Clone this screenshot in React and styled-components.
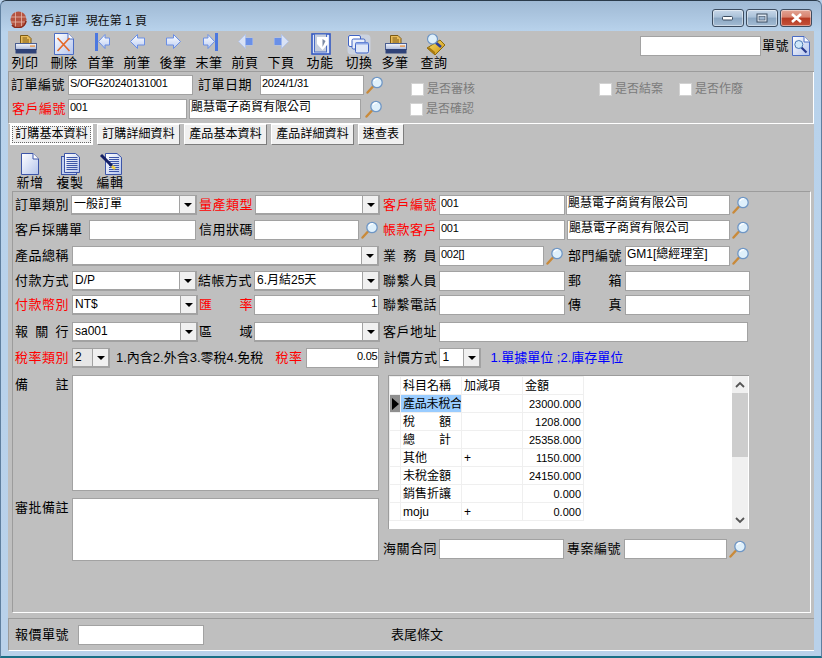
import React from "react";
import styled, { createGlobalStyle } from "styled-components";

const Global = createGlobalStyle`
  html, body { margin: 0; padding: 0; background: #b9d1ea; }
  * { box-sizing: border-box; }
`;
const FONT = `"Liberation Sans", "Noto Sans CJK TC", sans-serif`;

const Win = styled.div`
  width: 822px; height: 658px; display: flex; flex-direction: column;
  background: linear-gradient(#9fb9d4 0, #b9d3ec 31px, #b9d1ea 100%);
  border-radius: 6px 6px 0 0;
  border-top: 1px solid #2a3a4a; border-left: 1px solid #5f7f9f; border-right: 1px solid #5f7f9f;
  border-bottom: 2px solid #1b6f86;
  padding: 0 7px 6px 7px;
  font-family: ${FONT}; color: #000; overflow: hidden;
`;
const TitleBar = styled.div`
  height: 30px; flex: none; display: flex; align-items: center; padding: 6px 2px 0 2px;
`;
const TitleText = styled.span`
  font-size: 12px; margin-left: 4px; color: #111; white-space: pre;
`;
const WinBtns = styled.div`
  margin-left: auto; display: flex; gap: 2px; margin-right: 0; margin-top: -3px;
`;
const WinBtn = styled.div`
  width: 32px; height: 18px; border: 1px solid #3c4c60; border-radius: 3px;
  display: flex; align-items: center; justify-content: center;
  background: ${p => p.$close
    ? "linear-gradient(#e2a494 0, #d8826e 45%, #b63a22 50%, #c4513a 100%)"
    : "linear-gradient(#c8d8ea 0, #a9c0d8 45%, #8aa6c2 50%, #a4bcd4 100%)"};
  box-shadow: inset 0 0 0 1px rgba(255,255,255,.45);
`;
const Body = styled.div`
  flex: 1; display: flex; flex-direction: column; background: #bfbfbf; min-height: 0;
`;
const Toolbar = styled.div`
  height: 41px; flex: none; display: flex; padding-top: 2px; border-bottom: 1px solid #9c9c9c;
`;
const ToolBtn = styled.div`
  width: 34px; flex: none; display: flex; flex-direction: column; align-items: center;
  margin-left: ${p => p.$ml || 0}px;
`;
const ToolIcon = styled.div`
  height: 22px; display: flex; align-items: center; justify-content: center;
  margin-left: ${p => p.$dx || 0}px;
`;
const ToolLabel = styled.div`
  font-size: 13px; line-height: 15px; letter-spacing: .5px; white-space: nowrap;
`;
const SearchBox = styled.div`
  margin-left: auto; display: flex; align-items: flex-start; padding: 3px 4px 0 0;
`;
const Header = styled.div`
  height: 52px; flex: none; padding: 3px 0 0 2px;
  border-left: 1px solid #9c9c9c; border-right: 1px solid #fff; border-bottom: 1px solid #fff;
  display: flex; flex-direction: column; gap: 4px;
`;
const Row = styled.div`
  display: flex; height: 20px; flex: none; align-items: flex-start;
  margin-top: ${p => p.$mt || 0}px;
`;
const Label = styled.div`
  flex: none; width: ${p => p.$w || 54}px; margin-left: ${p => p.$ml || 0}px;
  font-size: 13px; line-height: 20px; letter-spacing: .5px; white-space: nowrap;
  color: ${p => p.$red ? "#f00" : "#000"};
  text-align: left;
  ${p => p.$just ? "text-align-last: justify; white-space: normal;" : ""}
`;
const Field = styled.div`
  flex: none; width: ${p => p.$w}px; height: ${p => p.$h || 20}px; margin-left: ${p => p.$ml || 0}px;
  background: #fff; border: 1px solid #a2a2a2;
  font-size: ${p => p.$cjk ? "12px" : "11px"}; letter-spacing: ${p => p.$cjk ? "0" : "-.25px"}; line-height: 14px;
  padding: 0 1px; white-space: nowrap; overflow: hidden;
  text-align: ${p => p.$right ? "right" : "left"};
`;
const Select = styled.div`
  flex: none; display: flex; width: ${p => p.$w}px; height: 20px; margin-left: ${p => p.$ml || 0}px;
  background: #fff; border: 1px solid #a2a2a2; border-right-width: 2px; border-bottom-width: 2px;
  font-size: 12px; line-height: 17px;
`;
const SelectText = styled.div`
  flex: 1; min-width: 0; padding-left: 2px; white-space: nowrap; overflow: hidden;
  background: ${p => p.$tint ? "#e6e6e6" : "transparent"};
`;
const SelectBtn = styled.div`
  width: 16px; flex: none; background: #f0f0f0; border-left: 1px solid #a2a2a2;
  display: flex; align-items: center; justify-content: center;
  &::after { content: ""; border: 4px solid transparent; border-top: 4px solid #000; border-bottom: 0; }
`;
const Note = styled.div`
  flex: none; margin-left: ${p => p.$ml || 0}px; font-size: 13px; line-height: 20px; white-space: nowrap;
  color: ${p => p.$blue ? "#00f" : "#000"};
`;
const MagWrap = styled.div`
  flex: none; width: 18px; height: 20px; margin-left: ${p => p.$ml || 2}px;
  display: flex; align-items: center; justify-content: center;
`;
const CheckItem = styled.div`
  flex: none; display: flex; align-items: center; width: ${p => p.$w}px; margin-left: ${p => p.$ml || 0}px;
  margin-top: ${p => p.$mt || 0}px; font-size: 12px; color: #7b7b7b; line-height: 14px;
`;
const CheckBox = styled.div`
  width: 13px; height: 13px; background: #fff; border: 1px solid #d2d2d2; margin-right: 3px;
`;
const Tabs = styled.div`
  height: 22px; flex: none; display: flex; gap: 4px; padding-left: 2px; margin-top: 0;
`;
const Tab = styled.div`
  width: ${p => p.$w}px; height: 21px; background: #f0f0f0; font-size: 12px; line-height: 19px;
  text-align: center; white-space: nowrap; letter-spacing: .1px;
  border: 1px solid; border-color: #fff #7d7d7d #7d7d7d #fff;
  ${p => p.$on ? "border: 2px solid #fff; outline: 1px dotted #666; outline-offset: -3px; line-height: 17px;" : ""}
`;
const SubBar = styled.div`
  height: 45px; flex: none; display: flex; gap: 6px; padding: 7px 0 0 5px;
`;
const FormPanel = styled.div`
  height: 422px; flex: none; margin: 0 3px 0 4px; padding: 3px 0 0 2px;
  border-top: 1px solid #9c9c9c; border-left: 1px solid #9c9c9c;
  border-right: 1px solid #fff; border-bottom: 1px solid #fff;
`;
const Rows = styled.div`
  display: flex; flex-direction: column;
`;
const Columns = styled.div`
  display: flex; margin-top: 7px;
`;
const LeftCol = styled.div`
  width: 364px; flex: none; display: flex; flex-direction: column; gap: 7px;
`;
const RightCol = styled.div`
  flex: none; margin-left: 4px; display: flex; flex-direction: column;
`;
const TextRow = styled.div`
  display: flex; align-items: flex-start;
`;
const GridBox = styled.div`
  width: 361px; height: 154px; margin-left: 5px; display: flex; background: #fff;
  border-top: 1px solid #9c9c9c; border-left: 1px solid #9c9c9c;
`;
const GridScroll = styled.div`
  flex: 1; min-width: 0;
`;
const Table = styled.table`
  border-collapse: collapse; table-layout: fixed; width: 194px; font-size: 12px;
`;
const Cell = styled.td`
  height: 18px; padding: 0 2px; border: 1px solid #efefef; white-space: nowrap; overflow: hidden;
  line-height: 16px; text-align: ${p => p.$right ? "right" : "left"};
  font-size: ${p => p.$num ? "11px" : "12px"};
  background: ${p => p.$sel ? "#99ccff" : "#fff"};
  ${p => p.$sel ? "padding-right: 0; letter-spacing: -.2px;" : ""}
`;
const Indicator = styled.td`
  height: 18px; width: 11px; padding: 0; border: 1px solid #efefef;
  background: ${p => p.$on ? "#8f8f8f" : "#fff"};
  text-align: center; line-height: 0;
`;
const IndicatorMark = styled.span`
  display: inline-block; border: 6px solid transparent; border-left: 7px solid #000; border-right: 0;
`;
const Spread = styled.span`
  display: block; width: 48px; text-align-last: justify;
`;
const ScrollBar = styled.div`
  width: 16px; flex: none; margin-right: 1px; background: #f0f0f0; display: flex; flex-direction: column;
`;
const ScrollArrow = styled.div`
  height: 17px; flex: none; display: flex; align-items: center; justify-content: center;
`;
const ScrollThumb = styled.div`
  height: 64px; background: #cdcdcd; flex: none;
`;
const ScrollTrack = styled.div`
  flex: 1;
`;
const Footer = styled.div`
  height: 33px; flex: none; margin-top: 5px; display: flex; align-items: flex-start; padding: 6px 0 0 6px;
  border-top: 1px solid #9c9c9c; border-left: 1px solid #9c9c9c; border-bottom: 1px solid #fff;
`;

const Mag = ({ ml }) => (
  <MagWrap $ml={ml}>
    <svg width="18" height="18" viewBox="0 0 18 18">
      <path d="M1.5 16.5 L7 10.5" stroke="#c98a3a" strokeWidth="2.4" strokeLinecap="round" />
      <circle cx="11" cy="6.5" r="5.2" fill="#dff0fb" stroke="#6f96c4" strokeWidth="1.3" />
      <path d="M8 5 a4 4 0 0 1 4 -2.4" stroke="#fff" strokeWidth="1.4" fill="none" />
    </svg>
  </MagWrap>
);

const Defs = () => (
  <svg width="0" height="0" style={{ position: "absolute" }}>
    <defs>
      <linearGradient id="arrowG" x1="0" y1="0" x2="0" y2="1">
        <stop offset="0" stopColor="#ffffff" /><stop offset="1" stopColor="#bccdf3" />
      </linearGradient>
      <linearGradient id="pageG" x1="0" y1="0" x2="1" y2="1">
        <stop offset="0" stopColor="#ffffff" /><stop offset="1" stopColor="#b4c4ec" />
      </linearGradient>
      <linearGradient id="printG" x1="0" y1="0" x2="0" y2="1">
        <stop offset="0" stopColor="#f6f8ff" /><stop offset="1" stopColor="#aab8d8" />
      </linearGradient>
      <linearGradient id="goldG" x1="0" y1="0" x2="1" y2="1">
        <stop offset="0" stopColor="#fbe26a" /><stop offset="1" stopColor="#c98f10" />
      </linearGradient>
    </defs>
  </svg>
);

const Printer = () => (
  <svg width="22" height="19" viewBox="0 0 22 19">
    <path d="M5.5 .5 H13 L16 3.5 V9 H5.5 Z" fill="#e9bb58" stroke="#7c5a14" />
    <path d="M7.5 3 H12 M7.5 5 H14 M7.5 7 H14" stroke="#7c5a14" />
    <rect x=".5" y="8.5" width="21" height="6" fill="url(#printG)" stroke="#4a5f92" />
    <rect x=".5" y="14" width="21" height="4.5" fill="#2f4278" />
    <rect x="15" y="10.5" width="5" height="1.2" fill="#f08a2a" />
  </svg>
);
const DeleteIcon = () => (
  <svg width="20" height="22" viewBox="0 0 20 22">
    <path d="M.5 .5 H14 L19.5 6 V21.5 H.5 Z" fill="url(#pageG)" stroke="#4a6cc4" />
    <path d="M14 .5 V6 H19.5" fill="#fff" stroke="#4a6cc4" />
    <path d="M3.5 5 L15.5 18 M15.5 5 L3.5 18" stroke="#e4692a" strokeWidth="1.7" />
  </svg>
);
const NavIcon = ({ dir, bar, solid }) => (
  <svg width="15" height="22" viewBox="0 0 15 22" style={dir === "r" ? { transform: "scaleX(-1)" } : undefined}>
    {bar && <rect x="0" y="0" width="3" height="18" fill="#4c78e0" />}
    {bar ? (
      <polygon points="3.5,8.5 10,1.5 10,5 14.5,5 14.5,12 10,12 10,15.5"
        fill="url(#arrowG)" stroke="#6a8fe6" />
    ) : (
      <polygon points=".5,8.5 7.5,1.5 7.5,5 14.5,5 14.5,12 7.5,12 7.5,15.5"
        fill={solid ? "#d9e2f5" : "url(#arrowG)"} stroke={solid ? "#b4c5ea" : "#6a8fe6"} />
    )}
    {solid && <rect x="7.5" y="5" width="7" height="7" fill="#6a90e8" />}
  </svg>
);
const FuncIcon = () => (
  <svg width="20" height="22" viewBox="0 0 20 22">
    <rect x="1" y="1" width="18" height="20" fill="#dfe7f8" stroke="#3459c4" strokeWidth="1.6" />
    <rect x="3.5" y="1" width="12" height="18" fill="#c6cedd" stroke="#4a6cc4" />
    <path d="M6 4 H17 V11 L11.5 17 L6 11 Z" fill="#fff" />
    <path d="M11.5 6 L14.5 8 L11.5 14 Z" fill="#7c8aa4" />
  </svg>
);
const SwitchIcon = () => (
  <svg width="24" height="21" viewBox="0 0 24 21">
    <rect x=".5" y=".5" width="23" height="20" rx="4" fill="#cfd8ea" opacity=".75" />
    <rect x="1.5" y="1.5" width="12" height="11" rx="1.5" fill="#fff" stroke="#3f62c4" />
    <rect x="5" y="5" width="13" height="10" rx="1.5" fill="#e8eefb" stroke="#3f62c4" />
    <rect x="8.5" y="8.5" width="13" height="10.5" rx="1.5" fill="#dfe7f8" stroke="#3f62c4" />
    <rect x="8.5" y="8.5" width="13" height="2" fill="#8ba6e6" />
  </svg>
);
const QueryIcon = () => (
  <svg width="20" height="23" viewBox="0 0 20 23">
    <polygon points="1,15 14,7 19,12 9,22" fill="url(#goldG)" stroke="#8a6a10" />
    <polygon points="1,15 9,22 9,19 3,14" fill="#a97a10" />
    <path d="M9 9 L15 14" stroke="#2b3f9a" strokeWidth="2.6" />
    <circle cx="6.5" cy="6" r="5" fill="#dff0fb" stroke="#6f96c4" strokeWidth="1.2" />
  </svg>
);
const FindDoc = () => (
  <svg width="18" height="20" viewBox="0 0 18 20">
    <path d="M.5 .5 H12 L17.5 6 V19.5 H.5 Z" fill="url(#pageG)" stroke="#4a6cc4" />
    <path d="M12 .5 V6 H17.5" fill="#fff" stroke="#4a6cc4" />
    <path d="M9 11 L14.5 16.5" stroke="#27398e" strokeWidth="2.2" />
    <circle cx="6.8" cy="8.5" r="4" fill="#cfe7f8" stroke="#4a78b4" />
  </svg>
);
const NewIcon = () => (
  <svg width="18" height="22" viewBox="0 0 18 22">
    <path d="M.5 .5 H12 L17.5 6 V21.5 H.5 Z" fill="url(#pageG)" stroke="#3c55a8" />
    <path d="M12 .5 V6 H17.5" fill="#fff" stroke="#3c55a8" />
  </svg>
);
const Lines = ({ x, y, w, n }) => (
  <path d={Array.from({ length: n }, (_, i) => `M${x} ${y + i * 2}.5 H${x + w}`).join(" ")} stroke="#3c55a8" />
);
const CopyIcon = () => (
  <svg width="19" height="22" viewBox="0 0 19 22">
    <rect x=".5" y="3.5" width="15" height="18" fill="#c3d0ee" stroke="#3c55a8" />
    <path d="M3.5 .5 H14.5 L18.5 4 V19.5 H3.5 Z" fill="url(#pageG)" stroke="#3c55a8" />
    <Lines x={5.5} y={4} w={11} n={7} />
  </svg>
);
const EditIcon = () => (
  <svg width="22" height="22" viewBox="0 0 22 22">
    <path d="M5.5 .5 H17 L21.5 4.5 V21.5 H5.5 Z" fill="url(#pageG)" stroke="#3c55a8" />
    <Lines x={9} y={4} w={10} n={8} />
    <path d="M1 2 L12 13" stroke="#141f66" strokeWidth="3" />
    <path d="M12 13 L15 16" stroke="#f0d040" strokeWidth="2.6" />
  </svg>
);
const Globe = () => (
  <svg width="17" height="17" viewBox="0 0 17 17">
    <circle cx="8.5" cy="8.5" r="8" fill="#b5533f" />
    <path d="M.8 6 H16 M.8 11 H16 M5.5 1 V16 M11.5 1 V16" stroke="#e6b9ac" strokeWidth=".8" />
    <path d="M2 14 A8 8 0 0 0 16 10" stroke="#8b2a1a" strokeWidth="1.6" fill="none" />
  </svg>
);

const Sel = ({ w, ml, tint, children }) => (
  <Select $w={w} $ml={ml}>
    <SelectText $tint={tint}>{children}</SelectText>
    <SelectBtn />
  </Select>
);

const Scroll = ({ up }) => (
  <ScrollArrow>
    <svg width="10" height="7" viewBox="0 0 10 7">
      <path d={up ? "M1 6 L5 2 L9 6" : "M1 1 L5 5 L9 1"} stroke="#555" strokeWidth="1.8" fill="none" />
    </svg>
  </ScrollArrow>
);

const tools = [
  ["列印", <Printer />, 0, 2], ["刪除", <DeleteIcon />, 5, 0],
  ["首筆", <NavIcon bar dir="l" />, 3, 3], ["前筆", <NavIcon dir="l" />, 2, 0],
  ["後筆", <NavIcon dir="r" />, 2, 0], ["末筆", <NavIcon bar dir="r" />, 2, 3],
  ["前頁", <NavIcon solid dir="l" />, 2, 0], ["下頁", <NavIcon solid dir="r" />, 2, 0],
  ["功能", <FuncIcon />, 5, 1], ["切換", <SwitchIcon />, 5, 0],
  ["多筆", <Printer />, 2, 1], ["查詢", <QueryIcon />, 5, 3],
];

const gridRows = [
  ["產品未稅合", "", "23000.000", false],
  ["稅額", "", "1208.000", true],
  ["總計", "", "25358.000", true],
  ["其他", "+", "1150.000", false],
  ["未稅金額", "", "24150.000", false],
  ["銷售折讓", "", "0.000", false],
  ["moju", "+", "0.000", false],
];

export default function App() {
  return (
    <Win>
      <Global />
      <Defs />
      <TitleBar>
        <Globe />
        <TitleText>客戶訂單  現在第 1 頁</TitleText>
        <WinBtns>
          <WinBtn>
            <svg width="12" height="6" viewBox="0 0 12 6"><rect x=".5" y="1.5" width="10" height="3.5" rx="1" fill="#fff" stroke="#3c4c60" /></svg>
          </WinBtn>
          <WinBtn>
            <svg width="12" height="10" viewBox="0 0 12 10"><rect x="1" y="1" width="10" height="8" fill="#dfe8f2" stroke="#3c4c60" /><rect x="3" y="3.5" width="6" height="3.5" fill="#9db5cf" stroke="#3c4c60" strokeWidth=".6" /></svg>
          </WinBtn>
          <WinBtn $close>
            <svg width="13" height="10" viewBox="0 0 13 10"><path d="M2 1 L11 9 M11 1 L2 9" stroke="#fff" strokeWidth="2.6" /></svg>
          </WinBtn>
        </WinBtns>
      </TitleBar>
      <Body>
        <Toolbar>
          {tools.map(([t, icon, ml, dx], i) => (
            <ToolBtn key={t + i} $ml={ml}>
              <ToolIcon $dx={dx}>{icon}</ToolIcon>
              <ToolLabel>{t}</ToolLabel>
            </ToolBtn>
          ))}
          <SearchBox>
            <Field $w={121} />
            <Label $w={30} $ml={1}>單號</Label>
            <FindDoc />
          </SearchBox>
        </Toolbar>

        <Header>
          <Row>
            <Label>訂單編號</Label>
            <Field $ml={3} $w={125}>S/OFG20240131001</Field>
            <Label $ml={5}>訂單日期</Label>
            <Field $ml={8} $w={104}>2024/1/31</Field>
            <Mag />
            <CheckItem $ml={27} $w={188} $mt={7}><CheckBox />是否審核</CheckItem>
            <CheckItem $w={80} $mt={7}><CheckBox />是否結案</CheckItem>
            <CheckItem $w={80} $mt={7}><CheckBox />是否作廢</CheckItem>
          </Row>
          <Row>
            <Label $red $ml={1}>客戶編號</Label>
            <Field $ml={2} $w={119}>001</Field>
            <Field $cjk $ml={2} $w={172}>颶慧電子商貿有限公司</Field>
            <Mag ml={4} />
            <CheckItem $ml={27} $w={80} $mt={3}><CheckBox />是否確認</CheckItem>
          </Row>
        </Header>

        <Tabs>
          <Tab $on $w={83}>訂購基本資料</Tab>
          <Tab $w={83}>訂購詳細資料</Tab>
          <Tab $w={83}>產品基本資料</Tab>
          <Tab $w={83}>產品詳細資料</Tab>
          <Tab $w={46}>速查表</Tab>
        </Tabs>

        <SubBar>
          <ToolBtn><ToolIcon><NewIcon /></ToolIcon><ToolLabel>新增</ToolLabel></ToolBtn>
          <ToolBtn><ToolIcon><CopyIcon /></ToolIcon><ToolLabel>複製</ToolLabel></ToolBtn>
          <ToolBtn><ToolIcon $dx={2}><EditIcon /></ToolIcon><ToolLabel>編輯</ToolLabel></ToolBtn>
        </SubBar>

        <FormPanel>
          <Rows>
            <Row>
              <Label>訂單類別</Label>
              <Sel ml={2} w={126}>一般訂單</Sel>
              <Label $red $ml={2}>量產類型</Label>
              <Sel ml={2} w={125} />
              <Label $red $ml={3}>客戶編號</Label>
              <Field $ml={2} $w={126}>001</Field>
              <Field $cjk $ml={1} $w={164}>颶慧電子商貿有限公司</Field>
              <Mag />
            </Row>
            <Row $mt={5}>
              <Label $w={71}>客戶採購單</Label>
              <Field $ml={3} $w={107} />
              <Label $ml={3}>信用狀碼</Label>
              <Field $ml={1} $w={105} />
              <Mag />
              <Label $red $ml={4}>帳款客戶</Label>
              <Field $ml={2} $w={126}>001</Field>
              <Field $cjk $ml={2} $w={163}>颶慧電子商貿有限公司</Field>
              <Mag />
            </Row>
            <Row $mt={6}>
              <Label>產品總稱</Label>
              <Sel ml={3} w={307} />
              <Label $just $ml={4}>業 務 員</Label>
              <Field $ml={2} $w={105}>002[]</Field>
              <Mag />
              <Label $ml={4}>部門編號</Label>
              <Field $cjk $ml={3} $w={105}>GM1[總經理室]</Field>
              <Mag />
            </Row>
            <Row $mt={5}>
              <Label>付款方式</Label>
              <Sel ml={3} w={125}>D/P</Sel>
              <Label $ml={1} $w={55}>結帳方式</Label>
              <Sel ml={1} w={126}>6.月結25天</Sel>
              <Label $ml={3}>聯繫人員</Label>
              <Field $ml={2} $w={126} />
              <Label $just $ml={3}>郵 箱</Label>
              <Field $ml={3} $w={125} />
            </Row>
            <Row $mt={4}>
              <Label $red>付款幣別</Label>
              <Sel ml={3} w={126}>NT$</Sel>
              <Label $red $just $ml={1}>匯 率</Label>
              <Field $ml={1} $w={125} $right>1</Field>
              <Label $ml={4}>聯繫電話</Label>
              <Field $ml={2} $w={126} />
              <Label $just $ml={3}>傳 真</Label>
              <Field $ml={3} $w={125} />
            </Row>
            <Row $mt={7}>
              <Label $just>報 關 行</Label>
              <Sel ml={3} w={126}>sa001</Sel>
              <Label $just $ml={1}>區 域</Label>
              <Sel ml={1} w={126} />
              <Label $ml={3}>客戶地址</Label>
              <Field $ml={2} $w={309} />
            </Row>
            <Row $mt={6}>
              <Label $red>稅率類別</Label>
              <Sel ml={3} w={38} tint>2</Sel>
              <Note $ml={6}>1.內含2.外含3.零稅4.免稅</Note>
              <Label $red $ml={12} $w={29}>稅率</Label>
              <Field $ml={2} $w={73} $right>0.05</Field>
              <Label $ml={4}>計價方式</Label>
              <Sel ml={2} w={42}>1</Sel>
              <Note $ml={9} $blue>1.單據單位 ;2.庫存單位</Note>
            </Row>
          </Rows>
          <Columns>
            <LeftCol>
              <TextRow>
                <Label $just>備 註</Label>
                <Field $ml={3} $w={307} $h={116} />
              </TextRow>
              <TextRow>
                <Label>審批備註</Label>
                <Field $ml={3} $w={307} $h={63} />
              </TextRow>
            </LeftCol>
            <RightCol>
              <GridBox>
                <GridScroll>
                  <Table>
                    <colgroup>
                      <col style={{ width: 11 }} /><col style={{ width: 61 }} /><col style={{ width: 61 }} /><col style={{ width: 61 }} />
                    </colgroup>
                    <thead>
                      <tr>
                        <Indicator as="th" />
                        <Cell as="th" style={{ fontWeight: 400 }}>科目名稱</Cell>
                        <Cell as="th" style={{ fontWeight: 400 }}>加減項</Cell>
                        <Cell as="th" style={{ fontWeight: 400 }}>金額</Cell>
                      </tr>
                    </thead>
                    <tbody>
                      {gridRows.map(([name, sign, amt, spread], i) => (
                        <tr key={name}>
                          <Indicator $on={i === 0}>{i === 0 && <IndicatorMark />}</Indicator>
                          <Cell $sel={i === 0}>{spread ? <Spread>{name.split("").join(" ")}</Spread> : name}</Cell>
                          <Cell>{sign}</Cell>
                          <Cell $right $num>{amt}</Cell>
                        </tr>
                      ))}
                    </tbody>
                  </Table>
                </GridScroll>
                <ScrollBar>
                  <Scroll up />
                  <ScrollThumb />
                  <ScrollTrack />
                  <Scroll />
                </ScrollBar>
              </GridBox>
              <Row $mt={10}>
                <Label>海關合同</Label>
                <Field $ml={2} $w={125} />
                <Label $ml={3}>專案編號</Label>
                <Field $ml={3} $w={103} />
                <Mag />
              </Row>
            </RightCol>
          </Columns>
        </FormPanel>

        <Footer>
          <Label>報價單號</Label>
          <Field $ml={9} $w={126} />
          <Note $ml={187}>表尾條文</Note>
        </Footer>
      </Body>
    </Win>
  );
}
